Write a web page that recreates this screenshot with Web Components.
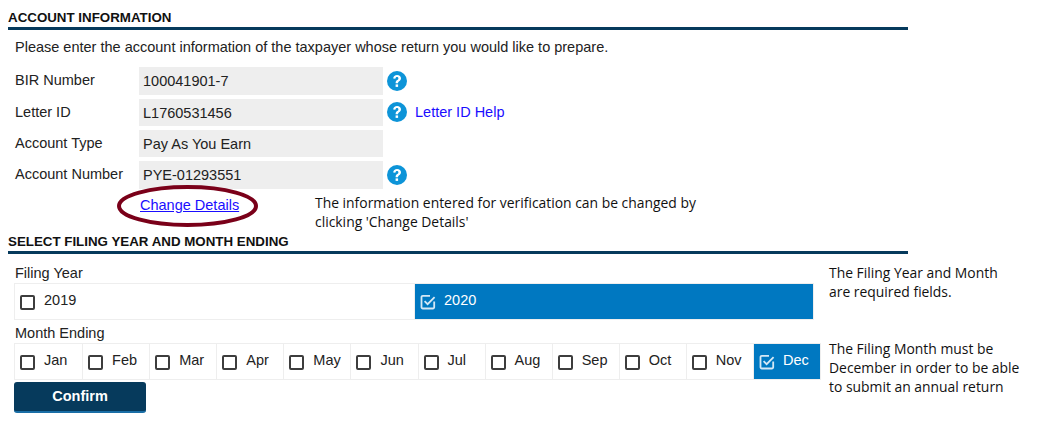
<!DOCTYPE html>
<html lang="en">
<head>
<meta charset="UTF-8">
<title>Account Information</title>
<style>
    html, body { margin: 0; background: #fff; }
    body { font-family: "Liberation Sans", Arial, sans-serif; font-size: 14.5px; color: #222; }
    .page { width: 1053px; height: 444px; padding: 8px 0 0 8px; box-sizing: border-box; overflow: hidden; }
    .fields { display: flex; flex-direction: column; gap: 3.83px; margin-left: 7px; }
    .details { display: flex; margin-left: 132px; height: 43.2px; }
    .details side-note { margin-top: 3.7px; }
    .filing { display: flex; margin-top: 6px; }
    .filing-main { display: flex; flex-direction: column; margin-left: 6px; width: 807px; }
    .filing-side { margin-left: 8px; padding-top: 2.5px; }
    .year { width: 800px; }
    primary-button { margin-top: 2px; }
</style>
</head>
<body>
<template id="section-heading-template">
    <style>
        :host { display: block; width: 900px; height: 19px; border-bottom: 3px solid #063a5c; }
        div { font: bold 13.33px/19px "Liberation Sans", Arial, sans-serif; color: #111; }
    </style>
    <div><slot></slot></div>
</template>
<template id="info-row-template">
    <style>
        :host { display: flex; align-items: stretch; height: 27.5px; }
        .label { width: 124px; line-height: 26px; color: #222; }
        .value { width: 244px; background: #eee; box-sizing: border-box; padding-left: 4px; line-height: 28px; color: #222; }
        .after { display: flex; align-items: center; margin-left: 4px; }
    </style>
    <div class="label" id="label"></div>
    <div class="value" id="value"></div>
    <div class="after"><slot></slot></div>
</template>
<template id="help-icon-template">
    <style>
        :host { display: block; width: 20px; height: 20px; }
        svg { display: block; }
    </style>
    <svg width="20" height="20" viewBox="0 0 20 20" aria-hidden="true">
        <circle cx="10" cy="10" r="10" fill="#0d94d8"/>
        <path d="M6.2 7.6C6.3 5.2 7.9 3.9 10.1 3.9c2.3 0 3.9 1.3 3.9 3.3 0 1.5-.8 2.3-1.8 3-.9.6-1.2 1.1-1.2 2.1H8.6c0-1.7.5-2.5 1.6-3.2.8-.5 1.2-1 1.2-1.7 0-.8-.6-1.3-1.4-1.3-.9 0-1.5.6-1.6 1.6z" fill="#fff"/>
        <rect x="8.6" y="13.4" width="2.5" height="2.5" fill="#fff"/>
    </svg>
</template>
<template id="side-note-template">
    <style>
        :host { display: block; font: 13.9px/19px "Open Sans", "Noto Sans", sans-serif; color: #111; }
        div { white-space: pre-line; }
    </style>
    <div><slot></slot></div>
</template>
<template id="choice-group-template">
    <style>
        :host { display: grid; grid-auto-flow: column; grid-auto-columns: 1fr; height: 37px; box-sizing: border-box; border: 1px solid #eee; }
    </style>
    <slot></slot>
</template>
<template id="choice-item-template">
    <style>
        :host { display: flex; min-width: 0; box-sizing: border-box; padding-left: 5px; border-left: 1px solid #eee; line-height: 33px; color: #222; }
        :host(:first-child) { border-left: 0; }
        :host([checked]) { background: #0078c1; background-clip: padding-box; color: #fff; }
        .box { flex: none; width: 15px; height: 15px; margin: 11px 9px 0 0; box-sizing: border-box; border: 2px solid #3d3d3d; border-radius: 2px; }
        svg { display: none; flex: none; margin: 10px 8px 0 0; }
        :host([checked]) .box { display: none; }
        :host([checked]) svg { display: block; }
    </style>
    <span class="box"></span>
    <svg width="16" height="16" viewBox="0 0 16 16" fill="none" stroke="#d5e8f5" stroke-width="1.8" aria-hidden="true">
        <path d="M14.2 7.5v5.7a1.3 1.3 0 0 1-1.3 1.3H2.8a1.3 1.3 0 0 1-1.3-1.3V3.1a1.3 1.3 0 0 1 1.3-1.3h7.2"/>
        <path d="M4.6 7.2l3 3 7-7"/>
    </svg>
    <span><slot></slot></span>
</template>
<template id="primary-button-template">
    <style>
        :host { display: block; width: 132px; height: 31px; box-sizing: border-box; background: #063a5c; border-bottom: 2px solid #1a6ea6; border-radius: 3px;
            color: #fff; font: bold 14.5px/29px "Liberation Sans", Arial, sans-serif; text-align: center; }
    </style>
    <slot></slot>
</template>
<template id="circled-link-template">
    <style>
        :host { display: block; position: relative; width: 175px; box-sizing: border-box; line-height: 32px; }
        a { color: #1a0dff; text-decoration: underline; }
        svg { position: absolute; left: -23px; top: -4px; }
    </style>
    <a href="#"><slot></slot></a>
    <svg width="141" height="42" viewBox="0 0 141 42" fill="none" aria-hidden="true">
        <ellipse cx="70.5" cy="21" rx="68.5" ry="19" stroke="#7a0019" stroke-width="4"/>
    </svg>
</template>

<div class="page">
    <section-heading>ACCOUNT INFORMATION</section-heading>
    <intro-text>Please enter the account information of the taxpayer whose return you would like to prepare.</intro-text>
    <div class="fields">
        <info-row label="BIR Number" value="100041901-7"><help-icon></help-icon></info-row>
        <info-row label="Letter ID" value="L1760531456"><help-icon></help-icon><help-link>Letter ID Help</help-link></info-row>
        <info-row label="Account Type" value="Pay As You Earn"></info-row>
        <info-row label="Account Number" value="PYE-01293551"><help-icon></help-icon></info-row>
    </div>
    <div class="details">
        <circled-link>Change Details</circled-link>
        <side-note>The information entered for verification can be changed by
clicking 'Change Details'</side-note>
    </div>
    <section-heading>SELECT FILING YEAR AND MONTH ENDING</section-heading>
    <div class="filing">
        <div class="filing-main">
            <field-caption>Filing Year</field-caption>
            <choice-group class="year">
                <choice-item>2019</choice-item>
                <choice-item checked>2020</choice-item>
            </choice-group>
            <field-caption>Month Ending</field-caption>
            <choice-group>
                <choice-item>Jan</choice-item>
                <choice-item>Feb</choice-item>
                <choice-item>Mar</choice-item>
                <choice-item>Apr</choice-item>
                <choice-item>May</choice-item>
                <choice-item>Jun</choice-item>
                <choice-item>Jul</choice-item>
                <choice-item>Aug</choice-item>
                <choice-item>Sep</choice-item>
                <choice-item>Oct</choice-item>
                <choice-item>Nov</choice-item>
                <choice-item checked>Dec</choice-item>
            </choice-group>
            <primary-button>Confirm</primary-button>
        </div>
        <div class="filing-side">
            <side-note>The Filing Year and Month
are required fields.</side-note>
            <side-note style="margin-top:38px">The Filing Month must be
December in order to be able
to submit an annual return</side-note>
        </div>
    </div>
</div>

<script>
    class TemplatedElement extends HTMLElement {
        constructor(templateId) {
            super();
            this.attachShadow({ mode: "open" });
            this.shadowRoot.appendChild(document.getElementById(templateId).content.cloneNode(true));
        }
    }

    class SectionHeading extends TemplatedElement { constructor() { super("section-heading-template"); } }
    class HelpIcon extends TemplatedElement { constructor() { super("help-icon-template"); } }
    class SideNote extends TemplatedElement { constructor() { super("side-note-template"); } }
    class ChoiceGroup extends TemplatedElement { constructor() { super("choice-group-template"); } }
    class ChoiceItem extends TemplatedElement { constructor() { super("choice-item-template"); } }
    class PrimaryButton extends TemplatedElement { constructor() { super("primary-button-template"); } }
    class CircledLink extends TemplatedElement { constructor() { super("circled-link-template"); } }

    class InfoRow extends TemplatedElement {
        constructor() { super("info-row-template"); }
        connectedCallback() {
            this.shadowRoot.getElementById("label").textContent = this.getAttribute("label");
            this.shadowRoot.getElementById("value").textContent = this.getAttribute("value");
        }
    }

    // the small text-only elements don't need a template
    class IntroText extends HTMLElement {
        constructor() {
            super();
            this.attachShadow({ mode: "open" }).innerHTML =
                "<style>:host { display: block; margin-left: 7px; height: 37.33px; line-height: 34px; }</style><slot></slot>";
        }
    }
    class FieldCaption extends HTMLElement {
        constructor() {
            super();
            this.attachShadow({ mode: "open" }).innerHTML =
                "<style>:host { display: block; height: 23px; padding-left: 1px; line-height: 27px; }</style><slot></slot>";
        }
    }
    class HelpLink extends HTMLElement {
        constructor() {
            super();
            this.attachShadow({ mode: "open" }).innerHTML =
                "<style>:host { display: block; margin-left: 8px; color: #1a0dff; }</style><slot></slot>";
        }
    }

    customElements.define("section-heading", SectionHeading);
    customElements.define("help-icon", HelpIcon);
    customElements.define("side-note", SideNote);
    customElements.define("choice-group", ChoiceGroup);
    customElements.define("choice-item", ChoiceItem);
    customElements.define("primary-button", PrimaryButton);
    customElements.define("circled-link", CircledLink);
    customElements.define("info-row", InfoRow);
    customElements.define("intro-text", IntroText);
    customElements.define("field-caption", FieldCaption);
    customElements.define("help-link", HelpLink);
</script>
</body>
</html>
